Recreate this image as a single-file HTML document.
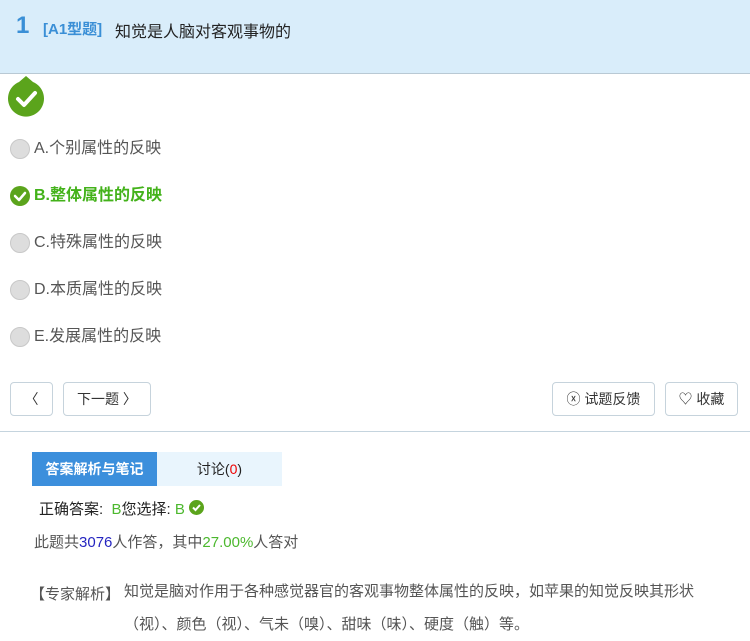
<!DOCTYPE html>
<html><head><meta charset="utf-8"><style>
*{margin:0;padding:0;box-sizing:border-box}
body{width:750px;height:640px;overflow:hidden;background:#fff;font-family:"Liberation Sans","Noto Sans CJK SC",sans-serif;color:#333;position:relative}
.hd{position:absolute;left:0;top:0;width:750px;height:74px;background:#d9edfa;border-bottom:1px solid #b9c9d4}
.num{position:absolute;left:16px;top:12px;font-size:24px;font-weight:bold;color:#3a8fd6}
.tp{position:absolute;left:43px;top:18px;font-size:15px;font-weight:bold;color:#3a8fd6}
.q{position:absolute;left:115px;top:18px;font-size:16px;color:#222}
.opt{position:absolute;left:10px;font-size:16px;color:#555;height:20px;line-height:20px}
.opt i{display:inline-block;width:20px;height:20px;border-radius:50%;background:#ddd;border:1px solid #c8c8c8;vertical-align:top;margin-right:4px}
.btn{position:absolute;top:382px;height:34px;border:1px solid #c6d3dc;border-radius:4px;font-size:14px;line-height:32px;color:#333;text-align:center;background:#fff}
.line{position:absolute;left:0;top:431px;width:750px;height:1px;background:#c5d4de}
.t1{position:absolute;left:32px;top:452px;width:125px;height:34px;background:#3c8fdc;color:#fff;font-weight:bold;font-size:14px;line-height:34px;text-align:center}
.t2{position:absolute;left:157px;top:452px;width:125px;height:34px;background:#e9f5fd;color:#222;font-size:14px;line-height:34px;text-align:center}
.txt{position:absolute;font-size:15px}
</style></head><body>
<div class="hd"><div class="num">1</div><div class="tp">[A1型题]</div><div class="q">知觉是人脑对客观事物的</div></div>
<svg style="position:absolute;left:7px;top:76px" width="38" height="42"><path d="M19 0 L26 6 A18 18 0 1 1 12 6 Z" fill="#5ba41c"/><path d="M11 23 L17 29 L28 17" stroke="#fff" stroke-width="4" fill="none" stroke-linecap="round" stroke-linejoin="round"/></svg>
<div class="opt" style="top:139px"><i></i>A.个别属性的反映</div>
<div class="opt" style="top:186px;color:#43b21a;font-weight:bold"><svg width="20" height="20" style="vertical-align:top;margin-right:4px"><circle cx="10" cy="10" r="10" fill="#5ba41c"/><path d="M5 10 L9 14 L15 7" stroke="#fff" stroke-width="2.5" fill="none" stroke-linecap="round" stroke-linejoin="round"/></svg>B.整体属性的反映</div>
<div class="opt" style="top:233px"><i></i>C.特殊属性的反映</div>
<div class="opt" style="top:280px"><i></i>D.本质属性的反映</div>
<div class="opt" style="top:327px"><i></i>E.发展属性的反映</div>
<div class="btn" style="left:10px;width:43px">〈</div>
<div class="btn" style="left:63px;width:88px">下一题 〉</div>
<div class="btn" style="left:552px;width:103px">ⓧ 试题反馈</div>
<div class="btn" style="left:665px;width:73px">♡ 收藏</div>
<div class="line"></div>
<div class="t1">答案解析与笔记</div>
<div class="t2">讨论(<span style="color:#e00">0</span>)</div>
<div class="txt" style="left:39px;top:498px;color:#222">正确答案:&nbsp; <span style="color:#4cb82e">B</span>您选择: <span style="color:#4cb82e">B</span> <svg width="15" height="15" style="vertical-align:-1px"><circle cx="7.5" cy="7.5" r="7.5" fill="#5ba41c"/><path d="M4 7.5 L6.5 10 L11 5" stroke="#fff" stroke-width="2" fill="none"/></svg></div>
<div class="txt" style="left:34px;top:531px;color:#555">此题共<span style="color:#2525c0">3076</span>人作答，其中<span style="color:#4cb82e">27.00%</span>人答对</div>
<div class="txt" style="left:30px;top:583px;color:#555">【专家解析】</div>
<div class="txt" style="left:124px;top:575px;color:#555;width:585px;line-height:33px">知觉是脑对作用于各种感觉器官的客观事物整体属性的反映，如苹果的知觉反映其形状（视）、颜色（视）、气未（嗅）、甜味（味）、硬度（触）等。</div>
</body></html>
